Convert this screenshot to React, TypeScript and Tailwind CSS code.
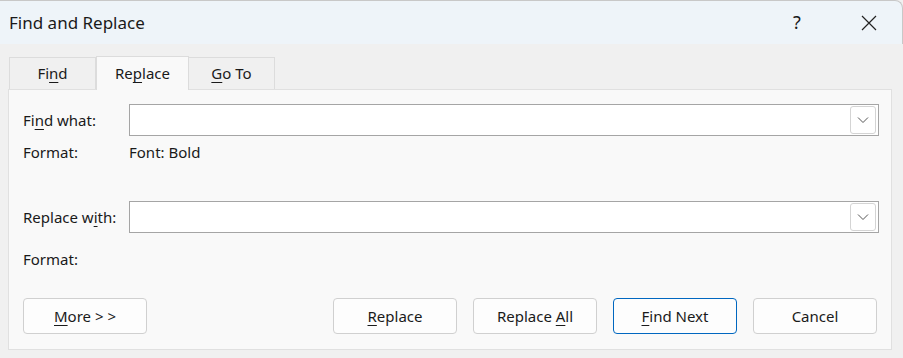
import React from 'react';

const font = { fontFamily: '"Noto Sans", "Open Sans", sans-serif' };

function U({ children }: { children: React.ReactNode }) {
  return <span className="underline underline-offset-[3px] decoration-1">{children}</span>;
}

function Combo() {
  return (
    <div className="flex-1 h-8 bg-white border border-[#a5a5a5] flex items-center justify-end pr-[2px]">
      <div className="w-[26px] h-[28px] border border-[#d4d4d4] rounded-[3px] flex items-center justify-center">
        <svg width="12" height="8" viewBox="0 0 12 8" fill="none">
          <path d="M1 1.5 L6 6.5 L11 1.5" stroke="#555" strokeWidth="1" />
        </svg>
      </div>
    </div>
  );
}

function Btn({ children, primary }: { children: React.ReactNode; primary?: boolean }) {
  return (
    <button
      className={
        'w-[124px] h-9 rounded-[4px] bg-[#fdfdfd] text-[15px] text-[#1a1a1a] ' +
        (primary ? 'border border-[#0067c0]' : 'border border-[#d0d0d0]')
      }
    >
      {children}
    </button>
  );
}

export default function App() {
  return (
    <div className="w-[903px] h-[358px] bg-[#f0f0f0] text-[#1a1a1a] overflow-hidden flex flex-col" style={font}>
      {/* Title bar */}
      <div className="h-11 bg-[#eef4f9] border-t border-r border-[#c8c8c8] rounded-tr-[8px] flex items-center">
        <span className="ml-[9px] text-[17px] flex-1">Find and Replace</span>
        <span className="text-[18px] w-[20px] text-center mr-[54px]">?</span>
        <svg width="16" height="16" viewBox="0 0 16 16" className="mr-[25px]">
          <path d="M1 1 L15 15 M15 1 L1 15" stroke="#222" strokeWidth="1.2" />
        </svg>
      </div>

      {/* Tabs */}
      <div className="flex items-end h-[45px] pl-[9px]">
        <div className="w-[87px] h-8 bg-[#f0f0f0] border border-b-0 border-[#dcdcdc] flex items-center justify-center text-[15px]">
          Fi<U>n</U>d
        </div>
        <div className="w-[93px] h-[34px] bg-[#f9f9f9] border border-b-0 border-[#dcdcdc] flex items-center justify-center text-[15px] -mb-px relative z-10">
          Re<U>p</U>lace
        </div>
        <div className="w-[86px] h-8 bg-[#f0f0f0] border border-b-0 border-l-0 border-[#dcdcdc] flex items-center justify-center text-[15px]">
          <U>G</U>o To
        </div>
      </div>

      {/* Panel */}
      <div className="ml-2 w-[884px] h-[261px] bg-[#f9f9f9] border border-[#e0e0e0] flex flex-col px-[14px] pr-[12px] text-[15px]">
        <div className="flex items-center mt-[14px]">
          <span className="w-[106px]">Fi<U>n</U>d what:</span>
          <Combo />
        </div>
        <div className="flex items-center mt-[4px] h-6">
          <span className="w-[106px]">Format:</span>
          <span>Font: Bold</span>
        </div>
        <div className="flex items-center mt-[37px]">
          <span className="w-[106px]">Replace w<U>i</U>th:</span>
          <Combo />
        </div>
        <div className="flex items-center mt-[14px] h-6">
          <span className="w-[106px]">Format:</span>
        </div>
        <div className="flex items-center mt-[27px]">
          <Btn>
            <U>M</U>ore &gt; &gt;
          </Btn>
          <div className="flex-1" />
          <div className="flex gap-[16px] mr-[2px]">
            <Btn>
              <U>R</U>eplace
            </Btn>
            <Btn>
              Replace <U>A</U>ll
            </Btn>
            <Btn primary>
              <U>F</U>ind Next
            </Btn>
            <Btn>Cancel</Btn>
          </div>
        </div>
      </div>
    </div>
  );
}
